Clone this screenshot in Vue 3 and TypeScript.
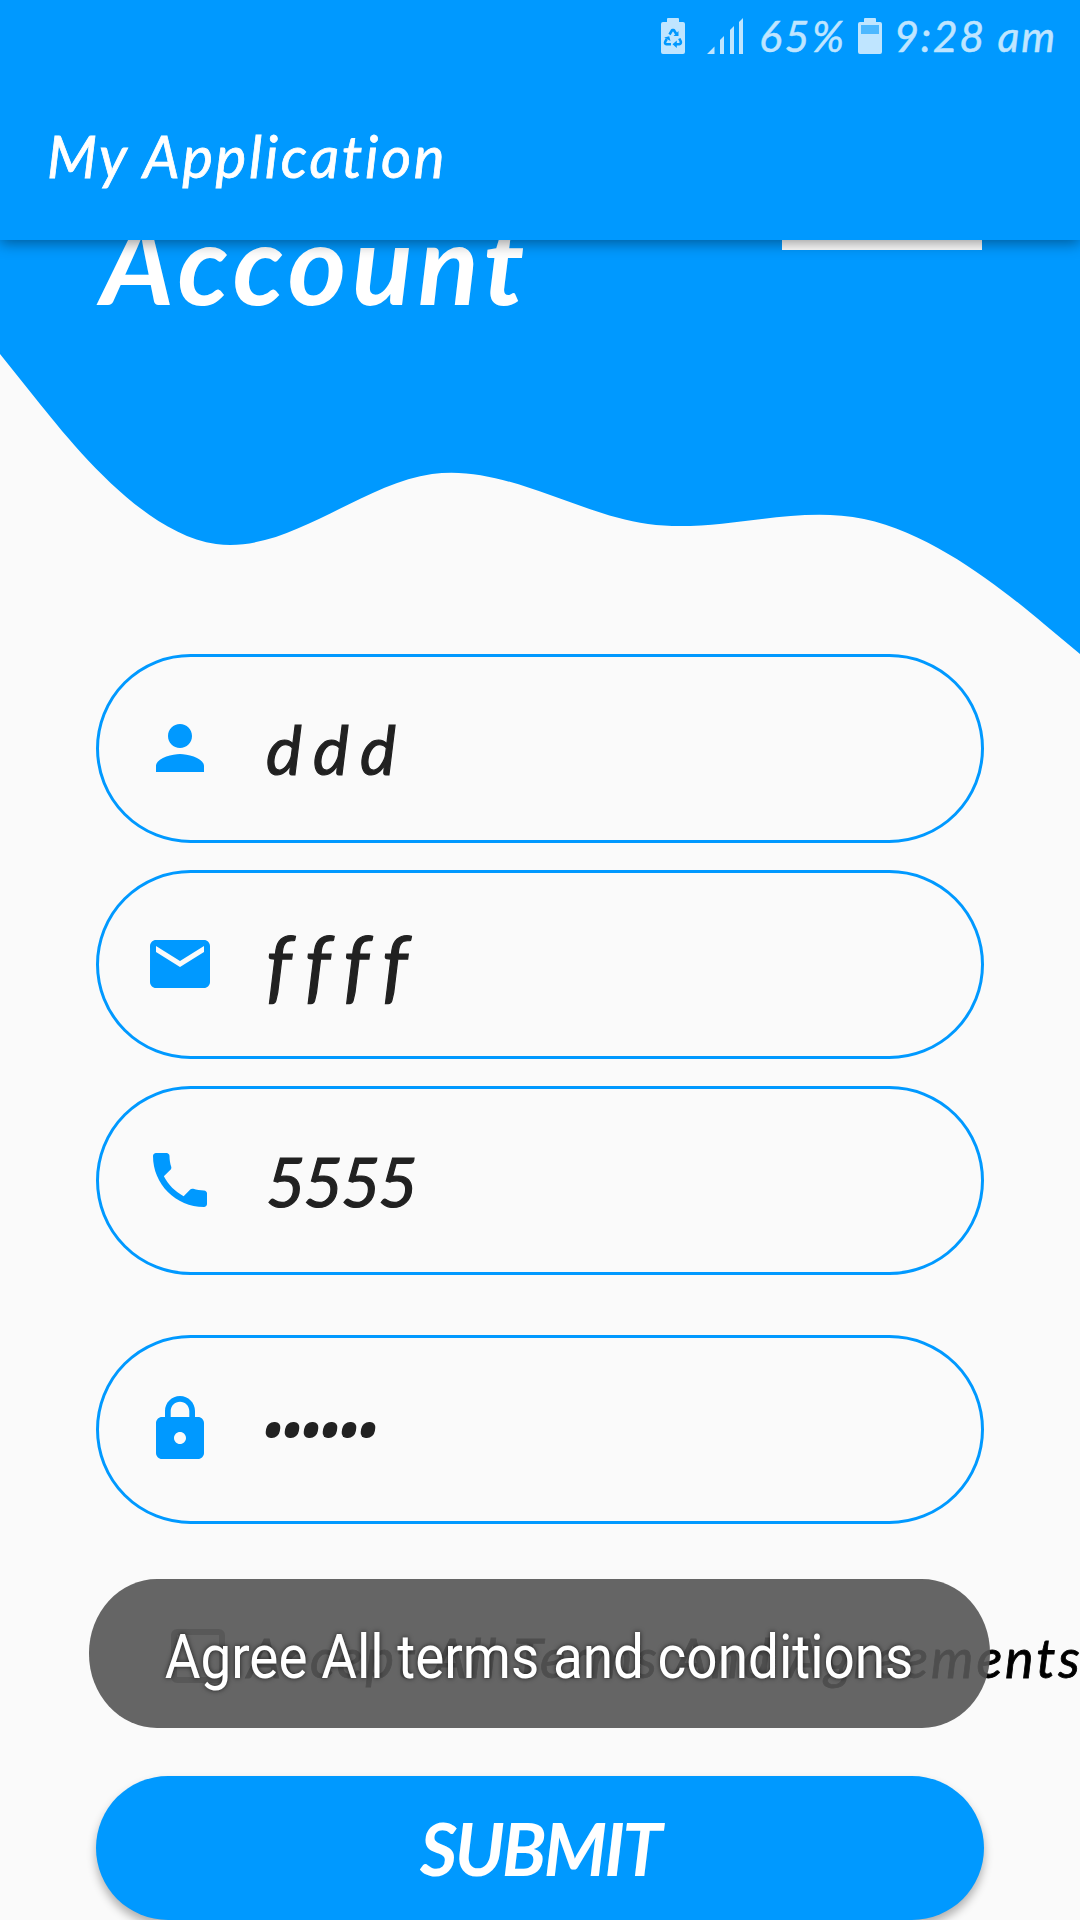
<script setup lang="ts">
interface Field {
  name: string
  icon: string
  value: string
}

const BULLETS = 6

const fields: Field[] = [
  {
    name: 'name',
    icon: 'M12 12c2.21 0 4-1.79 4-4s-1.79-4-4-4-4 1.79-4 4 1.79 4 4 4zm0 2c-2.67 0-8 1.34-8 4v2h16v-2c0-2.66-5.33-4-8-4z',
    value: 'ddd',
  },
  {
    name: 'email',
    icon: 'M20 4H4c-1.1 0-1.99.9-1.99 2L2 18c0 1.1.9 2 2 2h16c1.1 0 2-.9 2-2V6c0-1.1-.9-2-2-2zm0 4l-8 5-8-5V6l8 5 8-5v2z',
    value: 'ffff',
  },
  {
    name: 'phone',
    icon: 'M6.62 10.79c1.44 2.83 3.76 5.14 6.59 6.59l2.2-2.2c.27-.27.67-.36 1.02-.24 1.12.37 2.33.57 3.57.57.55 0 1 .45 1 1V20c0 .55-.45 1-1 1-9.39 0-17-7.61-17-17 0-.55.45-1 1-1h3.5c.55 0 1 .45 1 1 0 1.25.2 2.45.57 3.57.11.35.03.74-.25 1.02l-2.2 2.2z',
    value: '5555',
  },
  {
    name: 'password',
    icon: 'M18 8h-1V6c0-2.76-2.24-5-5-5S7 3.24 7 6v2H6c-1.1 0-2 .9-2 2v10c0 1.1.9 2 2 2h12c1.1 0 2-.9 2-2V10c0-1.1-.9-2-2-2zm-6 9c-1.1 0-2-.9-2-2s.9-2 2-2 2 .9 2 2-.9 2-2 2zm3.1-9H8.9V6c0-1.71 1.39-3.1 3.1-3.1 1.71 0 3.1 1.39 3.1 3.1v2z',
    value: '',
  },
]
</script>

<template>
  <div class="screen">
    <header class="top">
      <div class="status">
        <svg class="recycle" width="24" height="36" viewBox="0 0 24 36">
          <path fill="currentColor" d="M7 0h10q1 0 1 1v3h4q2 0 2 2v28q0 2-2 2H2q-2 0-2-2V6q0-2 2-2h4V1q0-1 1-1z" />
          <g fill="none" stroke="#0099ff" stroke-width="2.6" stroke-linejoin="round">
            <path d="M8.5 16.5l2.700-4.500h1.600l2.500 4M18.300 20.500l1.500 3q.5 2.500-1.600 2.800H15M10 26.300H5.600q-2.400-.5-1.200-3l1.300-2.300" />
          </g>
          <path fill="#0099ff" d="M17.500 13v5h-5zM15.800 22.500v7.500l-4.300-3.700zM3.200 19.500l5-1.300 1.300 4.800z" />
        </svg>
        <svg class="signal" width="36" height="36" viewBox="0 0 36 36">
          <path fill="currentColor" d="M0 36l7.500-7.500V36zM13 22l4-4v18h-4zM23 12l4-4v28h-4zM32 4l4-4v36h-4z" />
        </svg>
        <span class="percent">65%</span>
        <svg class="battery" width="24" height="36" viewBox="0 0 24 36">
          <path fill="currentColor" d="M7 0h10q1 0 1 1v3h4q2 0 2 2v28q0 2-2 2H2q-2 0-2-2V6q0-2 2-2h4V1q0-1 1-1z" />
          <path fill="#4db8ff" d="M3 7h18v9H3z" />
        </svg>
        <span class="clock">9:28 am</span>
      </div>
      <h1 class="app-title">My Application</h1>
    </header>

    <section class="hero">
      <svg class="wave" width="1080" height="414" viewBox="0 240 1080 414">
        <path
          fill="#0099ff"
          d="M0 240V354L36 399C72 444 144 534 216 544C288 554 360 484 432 474C504 464 576 514 648 524C720 534 792 504 864 519C936 534 1008 594 1044 624L1080 654V240z"
        />
      </svg>
      <div class="hero-row">
        <h2 class="heading">Account</h2>
        <div class="logo-edge"></div>
      </div>
    </section>

    <form class="form" @submit.prevent>
      <div v-for="f in fields" :key="f.name" class="field" :class="f.name">
        <svg class="icon" width="72" height="72" viewBox="0 0 24 24"><path :d="f.icon" /></svg>
        <span v-if="f.value" class="value">{{ f.value }}</span>
        <span v-else class="dots"><i v-for="n in BULLETS" :key="n"></i></span>
      </div>
      <label class="terms">
        <span class="box"></span>
        <span class="terms-text">Accept All Terms And Agreements</span>
      </label>
      <button class="submit" type="submit"><span>SUBMIT</span></button>
    </form>

    <div class="toast"><span>Agree All terms and conditions</span></div>
  </div>
</template>

<style>
body {
  background: #fafafa;
}
</style>

<style scoped>
.screen {
  position: relative;
  width: 1080px;
  height: 1920px;
  overflow: hidden;
  background: #fafafa;
  font-family: Lato, 'Noto Sans', sans-serif;
  font-style: italic;
  white-space: nowrap;
}
.top {
  position: relative;
  z-index: 2;
  height: 240px;
  background: #0099ff;
  color: #fff;
  box-shadow: 0 3px 14px rgba(0, 0, 0, 0.42);
}
.status {
  display: flex;
  height: 72px;
  align-items: center;
  color: #bfe5ff;
  padding-left: 661px;
  line-height: 72px;
  font-size: 43px;
  -webkit-text-stroke: 0.5px currentColor;
}
.signal {
  margin-left: 22px;
}
.percent {
  width: 99px;
  margin-left: 16px;
  letter-spacing: 2.5px;
}
.battery {
  margin-right: 12px;
}
.clock {
  letter-spacing: 1.6px;
}
.app-title {
  margin: 0;
  padding-left: 47px;
  font-size: 58px;
  font-weight: 400;
  line-height: 168px;
  height: 168px;
  letter-spacing: 2.7px;
  -webkit-text-stroke: 0.8px currentColor;
}
.hero {
  position: relative;
  height: 414px;
}
.wave {
  position: absolute;
  inset: 0;
}
.hero-row {
  position: relative;
  display: flex;
  justify-content: space-between;
  padding: 0 98px 0 101px;
  height: 100px;
}
.heading {
  margin: -43px 0 0;
  color: #fff;
  font-size: 112px;
  font-weight: 700;
  line-height: 130px;
  letter-spacing: 5.5px;
}
.logo-edge {
  width: 200px;
  height: 10px;
  background: #fff;
}
.form {
  display: flex;
  flex-direction: column;
  padding: 0 96px;
}
.field {
  box-sizing: border-box;
  display: flex;
  align-items: center;
  height: 189px;
  margin-bottom: 27px;
  padding-left: 45px;
  border: 3px solid #0099ff;
  border-radius: 94.5px;
}
.phone {
  margin-bottom: 60px;
}
.password {
  margin-bottom: 0;
}
.icon {
  flex: none;
  fill: #0099ff;
  margin: 0 50px 1px 0;
}
.value {
  color: #212121;
  font-size: 68px;
  line-height: 80px;
  letter-spacing: 11px;
  -webkit-text-stroke: 1.2px currentColor;
}
.email .value {
  font-size: 80px;
  letter-spacing: 13px;
  margin-bottom: 6px;
}
.phone .value {
  letter-spacing: -2px;
}
.dots {
  display: flex;
  gap: 5px;
}
.dots i {
  width: 14px;
  height: 16px;
  border-radius: 7px 6px 7px 6px;
  background: #212121;
  transform: skewX(-8deg);
}
.terms {
  display: flex;
  align-items: center;
  height: 252px;
  padding-left: 75px;
}
.box {
  box-sizing: border-box;
  flex: none;
  width: 54px;
  height: 54px;
  margin-top: 11px;
  border: 6px solid #757575;
  border-radius: 6px;
}
.terms-text {
  margin: 14px 0 0 22px;
  font-size: 54px;
  letter-spacing: 2.85px;
  color: #000;
  -webkit-text-stroke: 0.8px currentColor;
}
.submit {
  height: 144px;
  border: 0;
  border-radius: 72px;
  background: #0099ff;
  color: #fff;
  font: italic 700 72px Lato, sans-serif;
  letter-spacing: -2.5px;
  box-shadow: 0 6px 10px rgba(0, 0, 0, 0.3);
}
.toast {
  position: absolute;
  z-index: 3;
  left: 89px;
  top: 1579px;
  width: 901px;
  height: 149px;
  border-radius: 68px / 74px;
  background: rgba(86, 86, 86, 0.908);
  display: flex;
  justify-content: center;
  align-items: center;
  color: #fff;
  font: normal 400 62px Roboto, sans-serif;
  text-shadow: 0 0 6px rgba(0, 0, 0, 0.7);
}
.toast span {
  margin-top: 5px;
  transform: scaleX(0.885);
}
</style>
